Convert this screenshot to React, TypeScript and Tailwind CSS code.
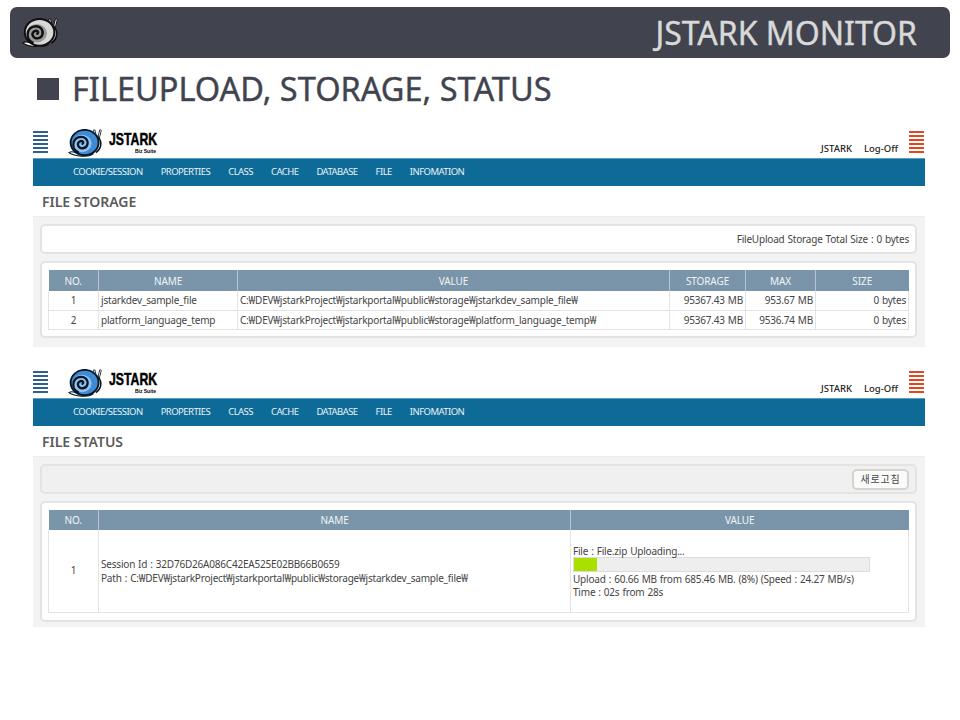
const font = { fontFamily: '"Noto Sans", "Noto Sans CJK KR", sans-serif' };

const navItems = ['COOKIE/SESSION', 'PROPERTIES', 'CLASS', 'CACHE', 'DATABASE', 'FILE', 'INFOMATION'];

const storageRows = [
  {
    no: 1,
    name: 'jstarkdev_sample_file',
    value: 'C:₩DEV₩jstarkProject₩jstarkportal₩public₩storage₩jstarkdev_sample_file₩',
    storage: '95367.43 MB',
    max: '953.67 MB',
    size: '0 bytes',
  },
  {
    no: 2,
    name: 'platform_language_temp',
    value: 'C:₩DEV₩jstarkProject₩jstarkportal₩public₩storage₩platform_language_temp₩',
    storage: '95367.43 MB',
    max: '9536.74 MB',
    size: '0 bytes',
  },
];

function Snail({ shell, mid, line, width }: { shell: string; mid: string; line: string; width: number }) {
  return (
    <svg width={width} height={width * 0.8} viewBox="0 0 40 32" fill="none">
      <path d="M1 27 C5 24 9 27 14 29 L28 29 C24 32 8 32 1 27 Z" fill="#fff" stroke={line} strokeWidth="1.2" />
      <path d="M32 10 L30 2 M35 10 L37 2" stroke={line} strokeWidth="2.8" strokeLinecap="round" />
      <path d="M32 10 L30 2 M35 10 L37 2" stroke="#fff" strokeWidth="1" strokeLinecap="round" />
      <path d="M33 8 C39 13 39 22 32 27" stroke={line} strokeWidth="2" />
      <path d="M33.5 10 C37 14 37 21 32 25" stroke="#fff" strokeWidth="1" />
      <ellipse cx="19" cy="15.5" rx="16" ry="14.5" fill={shell} stroke={line} strokeWidth="2.2" />
      <ellipse cx="16" cy="16.5" rx="11" ry="10" fill={mid} />
      <path
        d="M16.5 17 C19 15 16 12.5 13 14.5 C9.5 17 12 22.5 17 22 C22.5 21.5 24 15 20.5 11 C16.5 7.5 8.5 8.5 6.5 15 C5 20 7.5 24.5 11.5 26.5"
        stroke={line}
        strokeWidth="2.6"
        strokeLinecap="round"
      />
    </svg>
  );
}

function Lines({ color }: { color: string }) {
  return (
    <div className="flex w-[15px] flex-col gap-[2px]">
      {[0, 1, 2, 3, 4, 5].map((i) => (
        <div key={i} className="h-[2px]" style={{ backgroundColor: color }} />
      ))}
    </div>
  );
}

function TopBar() {
  return (
    <div className="flex h-[30px] items-start">
      <div className="pt-[3px]">
        <Lines color="#2f5f8f" />
      </div>
      <div className="ml-[20px] mt-[1px]">
        <Snail shell="#3f8ad6" mid="#8fc3ef" line="#0a1826" width={35} />
      </div>
      <div className="ml-[6px] mt-[4px] flex w-[47px] flex-col items-end text-black" style={{ fontFamily: '"Liberation Sans", sans-serif' }}>
        <span className="w-[47px] origin-left scale-x-[0.72] text-[17px] font-bold leading-[16px] whitespace-nowrap [-webkit-text-stroke:0.5px_black]">
          JSTARK
        </span>
        <span className="text-[5px] font-bold leading-[6px] whitespace-nowrap">Biz Suite</span>
      </div>
      <div className="ml-auto flex items-start">
        <span className="mt-[14px] text-[9.5px] font-medium leading-[14px] text-[#222]">JSTARK</span>
        <span className="ml-[12px] mt-[14px] text-[9.5px] font-medium leading-[14px] text-[#222]">Log-Off</span>
        <div className="ml-[11px] mr-[1px] pt-[3px]">
          <Lines color="#e2481f" />
        </div>
      </div>
    </div>
  );
}

function Nav() {
  return (
    <div className="flex h-[28px] items-center gap-[18px] border-t border-t-[#5b9fc0] bg-[#0e6b97] pl-[40px] text-[9.5px] tracking-[-0.55px] text-[#e8f1f6]">
      {navItems.map((n) => (
        <span key={n}>{n}</span>
      ))}
    </div>
  );
}

function Th({ children, className }: { children: React.ReactNode; className: string }) {
  return (
    <th className={`border-r border-r-[#b5c4d0] bg-[#7a95a9] p-0 pt-[1px] text-center text-[10px] font-normal tracking-[-0.1px] text-[#f0f4f7] last:border-r-0 ${className}`}>
      {children}
    </th>
  );
}

function StorageSection() {
  return (
    <section>
      <TopBar />
      <Nav />
      <h2 className="flex h-[30px] items-center pl-[9px] text-[14px] font-semibold text-[#5a5a5a]">FILE STORAGE</h2>
      <div className="flex h-[131px] flex-col gap-[7px] border-t border-t-[#ececec] bg-[#f3f3f3] pl-[7px] pr-[8px] pt-[7px]">
        <div className="flex h-[30px] items-center justify-end rounded-[5px] border-2 border-[#e3e3e3] bg-white pr-[6px] text-[10px] tracking-[-0.2px] text-[#444] [word-spacing:0.6px]">
          FileUpload Storage Total Size : 0 bytes
        </div>
        <div className="h-[77px] rounded-[5px] border-2 border-[#e3e3e3] bg-white pl-[6px] pt-[7px]">
          <table className="w-[860px] table-fixed border-collapse text-[10px] tracking-[-0.2px] text-[#444] [word-spacing:0.6px]">
            <thead>
              <tr className="h-[21px]">
                <Th className="w-[50px]">NO.</Th>
                <Th className="w-[139px]">NAME</Th>
                <Th className="w-[432px]">VALUE</Th>
                <Th className="w-[76px]">STORAGE</Th>
                <Th className="w-[70px]">MAX</Th>
                <Th className="w-[93px]">SIZE</Th>
              </tr>
            </thead>
            <tbody>
              {storageRows.map((r) => (
                <tr key={r.no} className="h-[19px] border-b border-b-[#e3e3e3]">
                  <td className="border-x border-[#e3e3e3] p-0 pt-[1px] text-center">{r.no}</td>
                  <td className="border-r border-r-[#e3e3e3] p-0 pl-[2px] pt-[1px] whitespace-nowrap">{r.name}</td>
                  <td className="border-r border-r-[#e3e3e3] p-0 pl-[2px] pt-[1px] whitespace-nowrap">{r.value}</td>
                  <td className="border-r border-r-[#e3e3e3] p-0 pr-[2px] pt-[1px] text-right whitespace-nowrap">{r.storage}</td>
                  <td className="border-r border-r-[#e3e3e3] p-0 pr-[2px] pt-[1px] text-right whitespace-nowrap">{r.max}</td>
                  <td className="border-r border-r-[#e3e3e3] p-0 pr-[2px] pt-[1px] text-right whitespace-nowrap">{r.size}</td>
                </tr>
              ))}
            </tbody>
          </table>
        </div>
      </div>
    </section>
  );
}

function StatusSection() {
  return (
    <section>
      <TopBar />
      <Nav />
      <h2 className="flex h-[30px] items-center pl-[9px] text-[14px] font-semibold text-[#5a5a5a]">FILE STATUS</h2>
      <div className="flex h-[171px] flex-col gap-[7px] border-t border-t-[#ececec] bg-[#f3f3f3] pl-[7px] pr-[8px] pt-[7px]">
        <div className="flex h-[30px] items-center justify-end rounded-[5px] border-2 border-[#e3e3e3] bg-[#f0f0f0] pr-[6px]">
          <button className="h-[21px] w-[57px] rounded-[5px] border-2 border-[#d4d4cc] bg-[#fafafa] text-[10px] tracking-[0.8px] text-[#444]">
            새로고침
          </button>
        </div>
        <div className="h-[121px] rounded-[5px] border-2 border-[#e3e3e3] bg-white pl-[6px] pt-[7px]">
          <table className="w-[860px] table-fixed border-collapse text-[10px] tracking-[-0.2px] text-[#444] [word-spacing:0.6px]">
            <thead>
              <tr className="h-[20px]">
                <Th className="w-[50px]">NO.</Th>
                <Th className="w-[472px]">NAME</Th>
                <Th className="w-[338px]">VALUE</Th>
              </tr>
            </thead>
            <tbody>
              <tr className="h-[82px] border-b border-b-[#e3e3e3]">
                <td className="border-x border-[#e3e3e3] p-0 text-center">1</td>
                <td className="border-r border-r-[#e3e3e3] p-0 pl-[2px] pt-[1px] leading-[14px]">
                  <div>Session Id : 32D76D26A086C42EA525E02BB66B0659</div>
                  <div>Path : C:₩DEV₩jstarkProject₩jstarkportal₩public₩storage₩jstarkdev_sample_file₩</div>
                </td>
                <td className="border-r border-r-[#e3e3e3] p-0 pl-[2px] leading-[13px]">
                  <div className="translate-y-[2px]">File : File.zip Uploading...</div>
                  <div className="my-[1px] h-[15px] w-[297px] border border-[#dcdcdc] bg-[#eeeeee]">
                    <div className="h-full w-[23px] bg-[#aadf00]" />
                  </div>
                  <div className="whitespace-nowrap">Upload : 60.66 MB from 685.46 MB. (8%) (Speed : 24.27 MB/s)</div>
                  <div>Time : 02s from 28s</div>
                </td>
              </tr>
            </tbody>
          </table>
        </div>
      </div>
    </section>
  );
}

export default function App() {
  return (
    <div className="min-h-[720px] w-[960px] bg-white" style={font}>
      <div className="px-[10px] pt-[7px]">
        <header className="flex h-[51px] items-center justify-between rounded-[7px] bg-[#41434e] pl-[12px] pr-[33px]">
          <Snail shell="#d8d8d8" mid="#9a9a9a" line="#111" width={37} />
          <span className="text-[32px] leading-none text-[#d9d9d9] [-webkit-text-stroke:0.4px_#d9d9d9]">JSTARK MONITOR</span>
        </header>
      </div>
      <div className="mt-[12px] flex h-[38px] items-center pl-[37px]">
        <div className="h-[22px] w-[22px] bg-[#41434e]" />
        <h1 className="ml-[13px] text-[32.5px] leading-none text-[#41434e] [-webkit-text-stroke:0.4px_#41434e]">FILEUPLOAD, STORAGE, STATUS</h1>
      </div>
      <div className="ml-[33px] mt-[20px] flex w-[892px] flex-col gap-[21px]">
        <StorageSection />
        <StatusSection />
      </div>
    </div>
  );
}
